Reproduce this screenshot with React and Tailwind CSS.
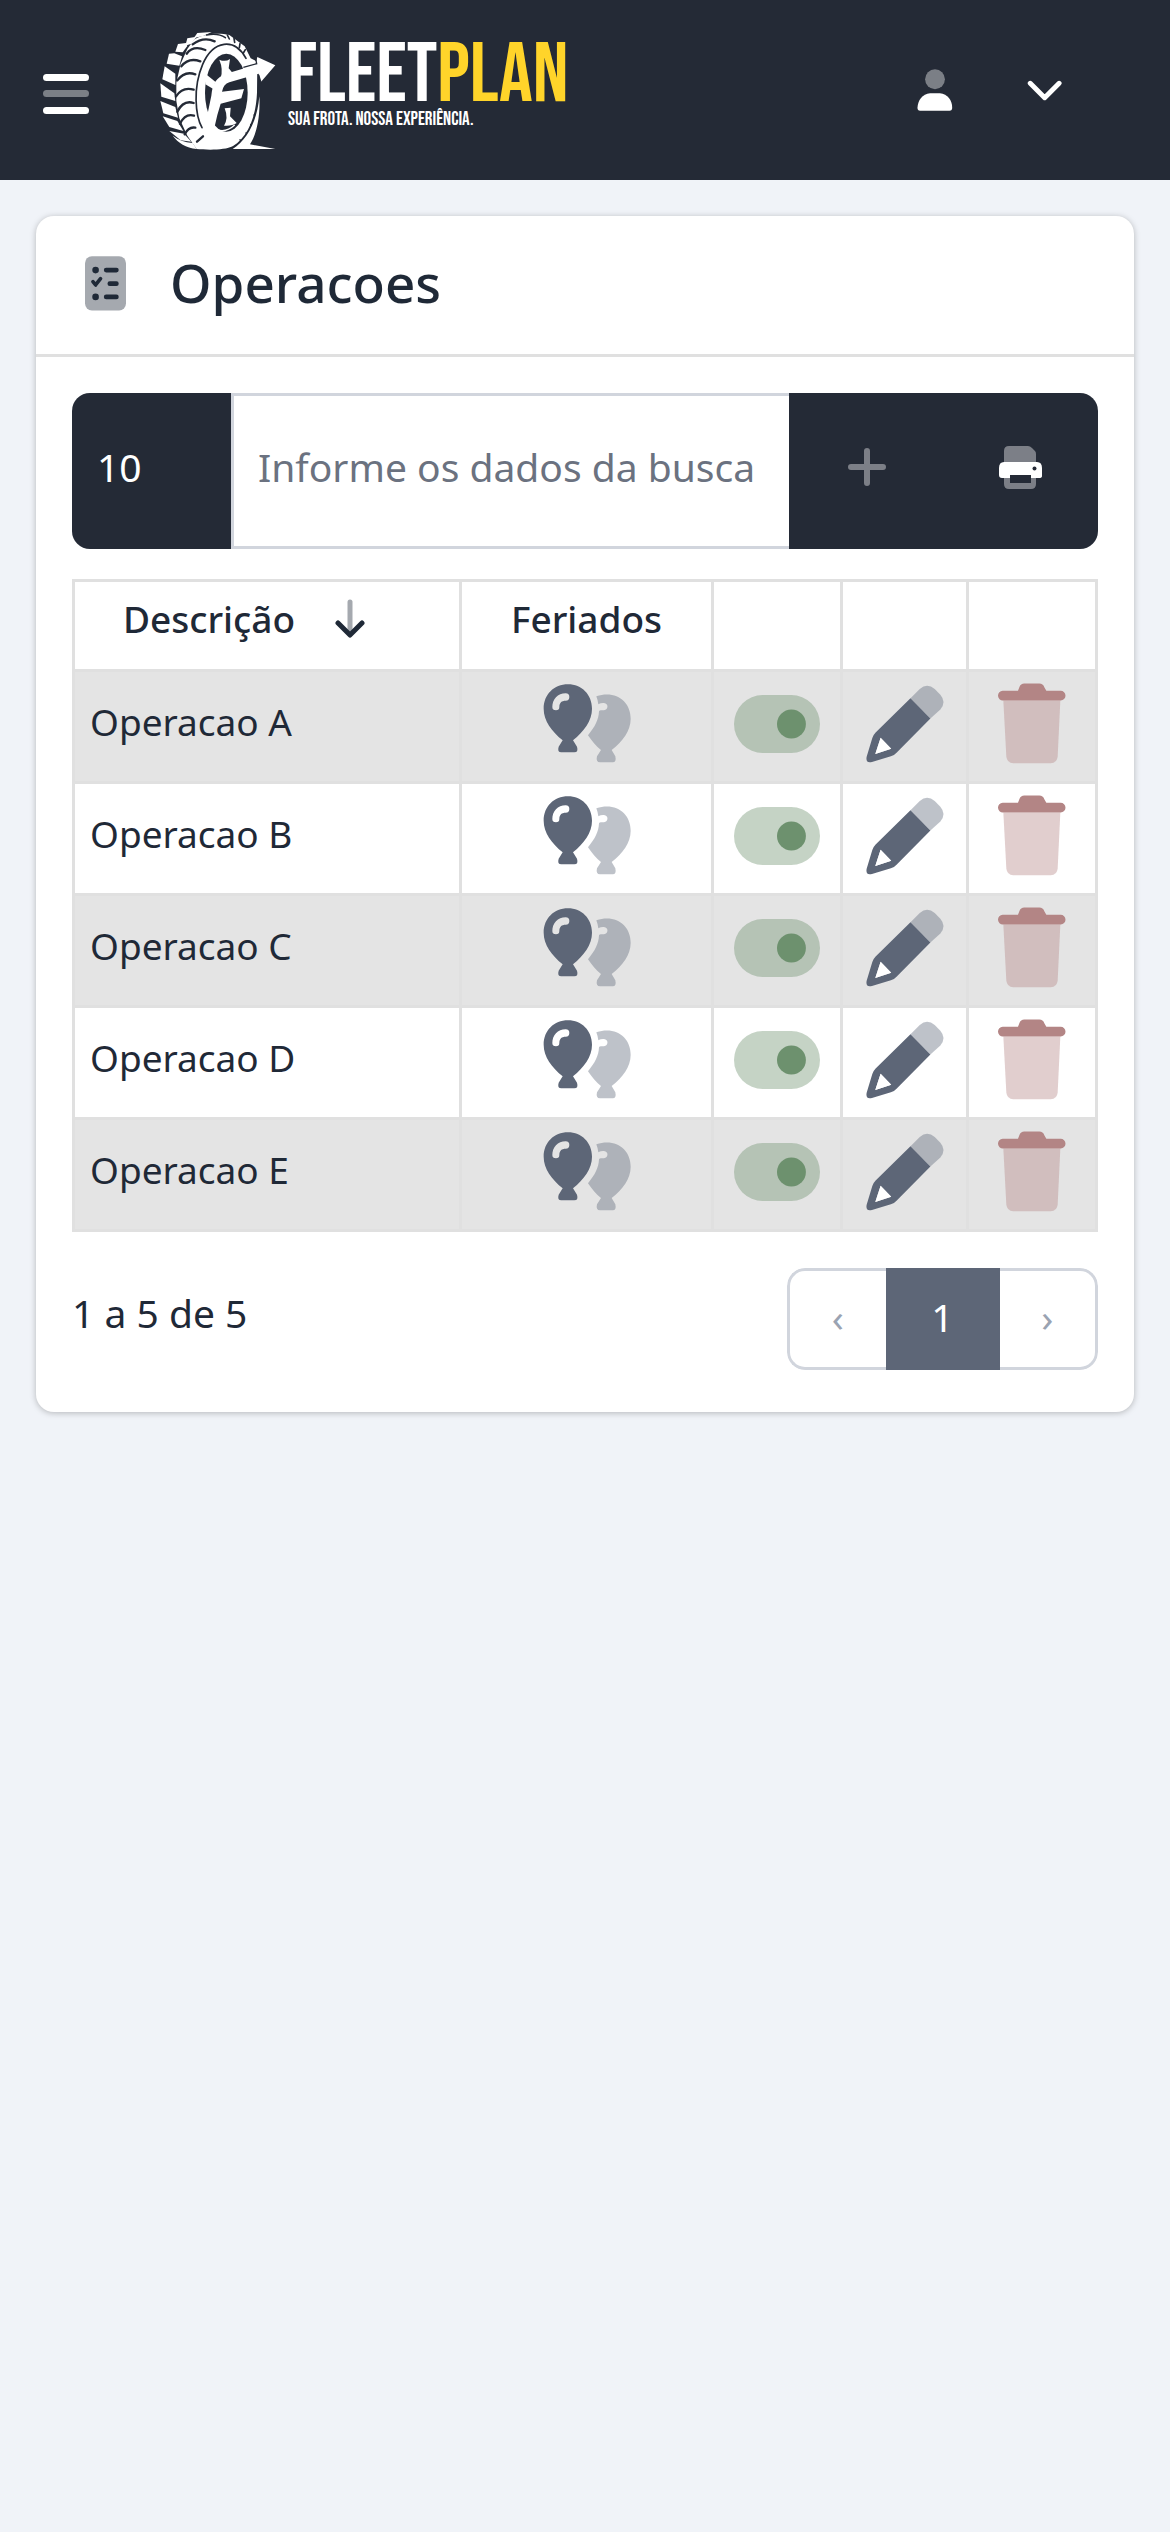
const rows = ["Operacao A", "Operacao B", "Operacao C", "Operacao D", "Operacao E"];

function TireLogo() {
  return (
    <svg viewBox="30 30 348 357" className="h-[119px] w-[116px] shrink-0" aria-hidden="true">
      <g fill="#fff">
        <path d="M142 36L185 33L158 46L132 50Z" />
        <path d="M112 52L140 47L124 68L106 74Z" />
        <path d="M84 69L108 66L112 75L98 94L76 92Z" />
        <path d="M57 98L73 97L96 106L88 134L50 128Z" />
        <path d="M44 136L76 158L76 192L37 175Z" />
        <path d="M31 187L73 217L76 240L34 227Z" />
        <path d="M31 240L76 258L84 290L40 277Z" />
        <path d="M38 286L82 300L100 330L58 318Z" />
        <path d="M58 330L102 338L124 362L92 358Z" />
        <path d="M68 344C84 356 104 364 128 366L140 384C108 380 84 366 68 344Z" />
        <path d="M132 56C160 38 205 34 238 42L284 76L302 112L322 122L321 215C318 290 292 350 248 376C226 388 170 387 140 384L112 344L88 292L79 240V185L92 128L112 84Z" />
      </g>
      <g fill="none" stroke="#242a36" strokeWidth="7" strokeLinecap="round">
        <path d="M128 70Q160 46 194 61M110 98Q130 72 166 87M94 136Q116 108 151 121M82 178Q104 148 136 160M78 226Q98 196 131 206M82 272Q100 236 131 246M90 308Q106 276 132 284M104 340Q116 316 136 320M141 362L159 346" />
        <path d="M170 42Q204 35 226 50M232 42L238 54M252 52L254 64M270 68L268 80M286 86L280 96" strokeWidth="5" />
        <path d="M156 320C136 284 128 200 158 130C190 56 254 50 288 112" strokeWidth="5" />
        <path d="M326 218C330 310 286 366 240 386" strokeWidth="7" strokeLinecap="butt" />
        <path d="M312 282L318 286M302 310L308 314M288 336L294 341M270 356L276 362" strokeWidth="4" />
      </g>
      <ellipse cx="229" cy="215" rx="64" ry="117" fill="#242a36" />
      <g fill="#fff">
        <path d="M208 116Q226 124 240 114L236 142L250 158L212 170Q220 145 208 116Z" />
        <path d="M224 262L242 260L240 286L260 306Q246 316 222 314Q236 292 224 262Z" />
        <path d="M168 160L196 182L190 204L166 190Z" />
        <path d="M322 108L376 133L332 184L326 158L238 184Q220 190 216 212L282 204L274 232L212 248L202 282L190 334L160 340L184 224C188 184 200 170 228 158L316 132Z" />
        <path d="M328 226C332 300 314 350 300 370L376 384H248C292 356 322 300 328 226Z" />
      </g>
      <path d="M316 108L320 128L280 139M326 162L334 188" fill="none" stroke="#242a36" strokeWidth="4" />
      <path d="M196 324Q226 338 254 312" fill="none" stroke="#fff" strokeWidth="4" />
    </svg>
  );
}

function Balloons() {
  return (
    <svg viewBox="22 26 264 237" className="h-[79px] w-[88px]" aria-hidden="true">
      <g fill="#5d6677">
        <path fillRule="evenodd" d="M97 27C138 27 169 58 169 100C169 136 145 168 112 195L124 214Q129 231 116 231H77Q64 231 69 214L81 195C48 168 24 136 24 100C24 58 55 27 97 27ZM90 54C66 54 50 72 50 95Q50 105 61 105Q71 105 71 95C71 82 78 76 90 76Q101 76 101 65Q101 54 90 54Z" />
        <path opacity=".4" d="M182 63C240 44 285 78 285 130C285 166 261 198 228 224L239 243Q243 261 231 261H193Q180 261 184 243L196 224C182 213 169 198 157 180C178 154 189 134 190 108C191 104 199 105 205 105C219 103 219 84 205 83Q196 82 188 87Q187 76 182 63Z" />
      </g>
    </svg>
  );
}

function Toggle() {
  return (
    <svg viewBox="23 57 259 174" className="h-[58px] w-[86px]" aria-hidden="true">
      <rect x="23" y="57" width="259" height="174" rx="87" fill="#6d916e" opacity=".4" />
      <circle cx="196" cy="144" r="43.500" fill="#6d916e" />
    </svg>
  );
}

function Pencil() {
  return (
    <svg viewBox="419 27 235 235" className="size-[78px]" aria-hidden="true">
      <g fill="#5d6677">
        <path fillRule="evenodd" d="M553 67L613 128L511 231Q504 239 494 242L437 259Q417 264 421 243L438 187Q441 177 448 170ZM463 186L447 235L495 219Z" />
        <path opacity=".4" d="M553 67L581 39Q603 20 626 39L643 56Q662 78 643 101L613 128Z" />
      </g>
      <path d="M463 186L447 235L495 219Z" fill="#fff" />
    </svg>
  );
}

function Trash() {
  return (
    <svg viewBox="818 20 204 242" className="h-[81px] w-[68px]" aria-hidden="true">
      <g fill="#b38585">
        <path d="M832 43H878L882 32Q886 21 897 21H942Q953 21 957 32L963 43H1006A14.500 14.500 0 0 1 1006 72H833A14.500 14.500 0 0 1 832 43Z" />
        <path opacity=".4" d="M834 72H1005L997 240Q995 260 976 260H864Q845 260 843 240Z" />
      </g>
    </svg>
  );
}

export default function App() {
  return (
    <div className="min-h-screen bg-[#f0f3f8] font-['Noto_Sans',sans-serif] text-[#1f2937]">
      <header className="flex h-[180px] items-center bg-[#242a36] pr-[107px] pl-[43px]">
        <button aria-label="Menu" className="mt-2 mr-[71px]">
          <svg viewBox="0 0 46 40" className="h-10 w-[46px]" aria-hidden="true" fill="#fff">
            <rect width="46" height="7" rx="3.500" />
            <rect y="16" width="46" height="7" rx="3.500" opacity=".4" />
            <rect y="33" width="46" height="7" rx="3.500" />
          </svg>
        </button>
        <a href="#" aria-label="Fleetplan" className="flex items-center gap-3 text-white">
          <TireLogo />
          <span className="flex flex-col pb-2 font-['Bebas_Neue','Oswald','Roboto_Condensed','Open_Sans_Condensed','Liberation_Sans_Narrow','Liberation_Sans',sans-serif]">
            <span className="text-[84px] leading-[68px]">
              FLEET<span className="text-[#ffd42a]">PLAN</span>
            </span>
            <span className="text-[19px] leading-5">SUA FROTA. NOSSA EXPERIÊNCIA.</span>
          </span>
        </a>
        <button aria-label="Usuário" className="ml-auto">
          <svg viewBox="168 146 108 127" className="h-[42px] w-9" aria-hidden="true" fill="#fff">
            <circle cx="222" cy="177" r="30" opacity=".4" />
            <path d="M207 219H237C260 221 274 240 274 263Q274 272 266 272H177Q169 272 169 263C170 240 184 221 207 219Z" />
          </svg>
        </button>
        <button aria-label="Abrir menu do usuário" className="ml-[74px]">
          <svg viewBox="499 178 108 64" className="h-[21px] w-9" aria-hidden="true">
            <path d="M508 188L552 232L596 188" fill="none" stroke="#fff" strokeWidth="15" strokeLinecap="round" strokeLinejoin="round" />
          </svg>
        </button>
      </header>

      <main className="p-9">
        <section className="rounded-[18px] bg-white shadow-[0_1px_6px_rgba(0,0,0,0.25)]">
          <div className="flex h-[141px] items-center border-b-[3px] border-[#e0e0e0] px-[49px] pb-1">
            <svg viewBox="27 28 124 165" className="h-[55px] w-[41px]" aria-hidden="true">
              <rect x="27" y="28" width="124" height="164" rx="21" fill="#1f2937" opacity=".4" />
              <g fill="none" stroke="#1f2937" strokeLinecap="round" strokeLinejoin="round" strokeWidth="14">
                <path d="M91 70H122M102 111H122M91 151H122" />
                <path d="M51 105L59 115L74 96" strokeWidth="11" />
              </g>
              <circle cx="59" cy="70" r="10" fill="#1f2937" />
              <circle cx="59" cy="151" r="10" fill="#1f2937" />
            </svg>
            <h1 className="ml-11 text-[53px] leading-[72px] font-medium">Operacoes</h1>
          </div>

          <div className="px-9 pt-9 pb-[42px]">
            <div className="flex h-[156px] overflow-hidden rounded-[18px] text-[39px]">
              <select aria-label="Itens por página" className="w-[159px] appearance-none bg-[#242a36] px-[25px] pb-2 text-white">
                <option>10</option>
              </select>
              <input
                type="text"
                aria-label="Busca"
                placeholder="Informe os dados da busca"
                className="min-w-0 flex-1 border-y-[3px] border-l-[3px] border-[#d1d5dd] px-6 pb-2 placeholder:text-[#6b7280]"
              />
              <button aria-label="Adicionar" className="flex w-[156px] items-center justify-center bg-[#242a36] pb-2">
                <svg viewBox="0 0 38 38" className="size-[38px]" aria-hidden="true">
                  <path d="M19 3V35M3 19H35" stroke="#7c7f87" strokeWidth="6" strokeLinecap="round" />
                </svg>
              </button>
              <button aria-label="Imprimir" className="flex w-[153px] items-center bg-[#242a36] pb-2 pl-[54px]">
                <svg viewBox="0 0 43 43" className="size-[43px]" aria-hidden="true">
                  <path d="M5 16V5Q5 0 10 0H29Q31 0 33 2L36 5Q37 6 37 8V16ZM5 32H11V37H32V32H37V38Q37 43 32 43H10Q5 43 5 38Z" fill="#7c7f87" />
                  <path d="M5 16H38Q43 16 43 22V30Q43 32 40 32H32V29H11V32H3Q0 32 0 29V22Q0 16 5 16Z" fill="#fff" />
                  <circle cx="35.500" cy="22.500" r="2" fill="#242a36" />
                </svg>
              </button>
            </div>

            <table className="mt-[30px] w-full table-fixed border-separate border-spacing-0 border-t-[3px] border-l-[3px] border-[#e0e0e0] text-[37px] leading-[48px]">
              <colgroup>
                <col />
                <col className="w-[252px]" />
                <col className="w-[129px]" />
                <col className="w-[126px]" />
                <col className="w-[129px]" />
              </colgroup>
              <thead>
                <tr className="h-[90px] *:border-r-[3px] *:border-b-[3px] *:border-[#e0e0e0] *:px-0 *:pt-0 *:pb-3.5 *:font-medium">
                  <th>
                    <button className="flex items-center gap-10 pl-12">
                      Descrição
                      <svg viewBox="0 0 30 39" className="h-[39px] w-[30px]" aria-hidden="true" fill="none" stroke="#1f2937" strokeWidth="5" strokeLinecap="round" strokeLinejoin="round">
                        <path d="M15 3V34" opacity=".4" />
                        <path d="M3 24L15 36L27 24" />
                      </svg>
                    </button>
                  </th>
                  <th>Feriados</th>
                  <th></th>
                  <th></th>
                  <th></th>
                </tr>
              </thead>
              <tbody>
                {rows.map((name) => (
                  <tr key={name} className="h-28 odd:bg-[#e4e4e4] *:border-r-[3px] *:border-b-[3px] *:border-[#e0e0e0] *:pt-0 *:pb-1.5">
                    <td className="pl-[15px]"><span className="block pb-1">{name}</span></td>
                    <td>
                      <button aria-label="Feriados" className="mx-auto block"><Balloons /></button>
                    </td>
                    <td>
                      <button aria-label="Ativar" className="mx-auto block"><Toggle /></button>
                    </td>
                    <td>
                      <button aria-label="Editar" className="mx-auto block"><Pencil /></button>
                    </td>
                    <td>
                      <button aria-label="Excluir" className="mx-auto block"><Trash /></button>
                    </td>
                  </tr>
                ))}
              </tbody>
            </table>

            <div className="mt-9 flex items-center justify-between text-[39px]">
              <p className="pb-3">1 a 5 de 5</p>
              <nav aria-label="Paginação" className="flex h-[102px] w-[311px] overflow-hidden rounded-[18px]">
                <button aria-label="Anterior" disabled className="flex-1 rounded-l-[18px] border-y-[3px] border-l-[3px] border-[#d1d5dd] pb-1 text-[#9aa3b2]">‹</button>
                <button aria-current="page" className="w-[114px] bg-[#5d6677] pb-1 text-white">1</button>
                <button aria-label="Próxima" disabled className="flex-1 rounded-r-[18px] border-y-[3px] border-r-[3px] border-[#d1d5dd] pb-1 text-[#9aa3b2]">›</button>
              </nav>
            </div>
          </div>
        </section>
      </main>
    </div>
  );
}
